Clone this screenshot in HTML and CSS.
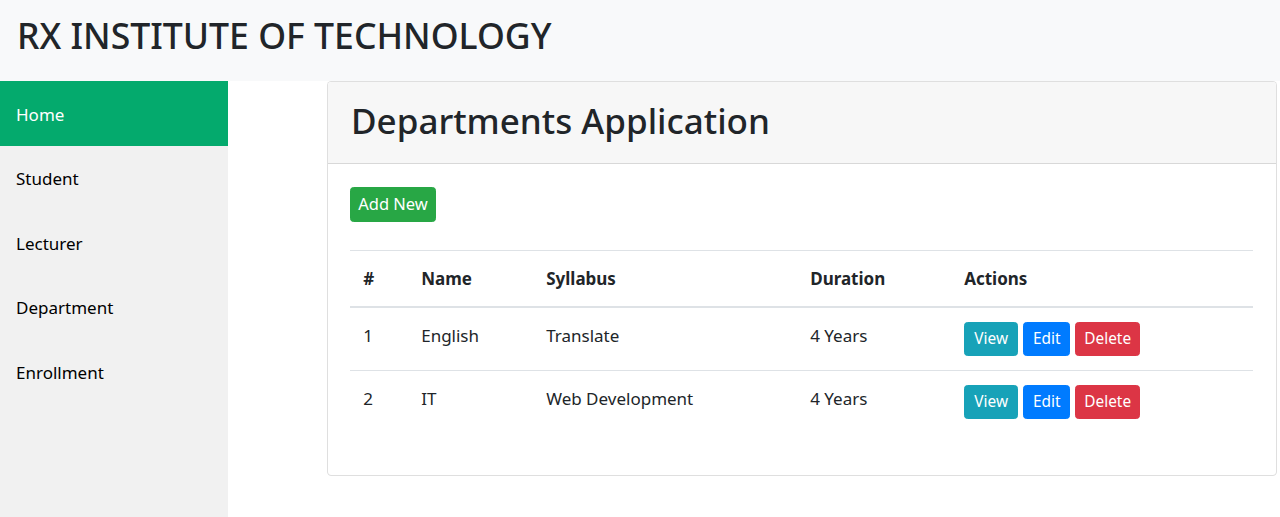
FILE: index.html
```html
<!DOCTYPE html>
<html lang="en">
<head>
<meta charset="utf-8">
<title>RX Institute of Technology</title>
<link rel="stylesheet" href="styles.css">
</head>
<body>
<header class="topbar">
  <h1 class="brand">RX INSTITUTE OF TECHNOLOGY</h1>
</header>
<div class="layout">
  <nav class="sidebar">
    <a class="nav-link active" href="#">Home</a>
    <a class="nav-link" href="#">Student</a>
    <a class="nav-link" href="#">Lecturer</a>
    <a class="nav-link" href="#">Department</a>
    <a class="nav-link" href="#">Enrollment</a>
  </nav>
  <main class="content">
    <section class="card">
      <div class="card-header">
        <h2 class="card-title">Departments Application</h2>
      </div>
      <div class="card-body">
        <button class="btn btn-success btn-add">Add New</button>
        <table class="table">
          <colgroup>
            <col class="c-num"><col class="c-name"><col class="c-syl"><col class="c-dur"><col>
          </colgroup>
          <thead>
            <tr><th>#</th><th>Name</th><th>Syllabus</th><th>Duration</th><th>Actions</th></tr>
          </thead>
          <tbody>
            <tr>
              <td>1</td><td>English</td><td>Translate</td><td>4 Years</td>
              <td><div class="actions"><button class="btn btn-sm btn-info">View</button><button class="btn btn-sm btn-primary">Edit</button><button class="btn btn-sm btn-danger">Delete</button></div></td>
            </tr>
            <tr>
              <td>2</td><td>IT</td><td>Web Development</td><td>4 Years</td>
              <td><div class="actions"><button class="btn btn-sm btn-info">View</button><button class="btn btn-sm btn-primary">Edit</button><button class="btn btn-sm btn-danger">Delete</button></div></td>
            </tr>
          </tbody>
        </table>
      </div>
    </section>
  </main>
</div>
</body>
</html>
```
FILE: styles.css
```css
* { box-sizing: border-box; }
html, body { margin: 0; padding: 0; }
body {
  font-family: "Noto Sans", "Open Sans", sans-serif;
  font-size: 17px;
  line-height: 1.5;
  color: #212529;
  background: #fff;
  height: 517px;
  overflow: hidden;
}
.topbar {
  background: #f8f9fa;
  height: 81px;
  display: flex;
  align-items: center;
  padding: 0 0 10px 17px;
}
.brand {
  margin: 0;
  font-size: 35.6px;
  font-weight: 500;
  line-height: 1.2;
  color: #212529;
}
.layout {
  display: flex;
  height: 436px;
}
.sidebar {
  width: 228px;
  flex: none;
  background: #f1f1f1;
  display: flex;
  flex-direction: column;
}
.nav-link {
  display: flex;
  align-items: center;
  height: 64.5px;
  padding: 2px 16px 0 16px;
  color: #000;
  text-decoration: none;
  font-size: 17px;
}
.nav-link.active {
  background: #04aa6d;
  color: #fff;
}
.content {
  flex: 1;
  padding: 0 3px 0 99px;
}
.card {
  height: 395px;
  border: 1px solid rgba(0,0,0,.125);
  border-radius: 4.4px;
  background: #fff;
  overflow: hidden;
}
.card-header {
  height: 82px;
  background: #f7f7f7;
  border-bottom: 1px solid rgba(0,0,0,.125);
  display: flex;
  align-items: center;
  padding: 0 0 4px 23px;
}
.card-title {
  margin: 0;
  font-size: 35px;
  font-weight: 500;
  line-height: 1.2;
}
.card-body {
  padding: 23px 23px 0 22px;
}
.btn {
  font-family: inherit;
  border: 1px solid transparent;
  border-radius: 3.5px;
  color: #fff;
  cursor: pointer;
  line-height: 1.5;
}
.btn-add {
  display: block;
  height: 35px;
  width: 86px;
  padding: 0;
  font-size: 16.5px;
}
.btn-sm {
  height: 34px;
  padding: 0 8px;
  font-size: 15.4px;
}
.btn-success { background: #28a745; border-color: #28a745; }
.btn-info { background: #17a2b8; border-color: #17a2b8; }
.btn-primary { background: #007bff; border-color: #007bff; }
.btn-danger { background: #dc3545; border-color: #dc3545; }
.table {
  width: 903px;
  margin-top: 28px;
  border-collapse: collapse;
  table-layout: fixed;
}
.c-num { width: 58px; }
.c-name { width: 125px; }
.c-syl { width: 264px; }
.c-dur { width: 154px; }
.table th, .table td {
  text-align: left;
  vertical-align: top;
  border-top: 1px solid #dee2e6;
  font-size: 17px;
}
.table th {
  font-weight: 700;
  padding: 15px 13.2px 14px;
  line-height: 26px;
  border-bottom: 2px solid #dee2e6;
}
.table td {
  padding: 14px 13.2px 14px;
  line-height: 28px;
}
.actions {
  display: flex;
  gap: 5px;
}
.actions .btn-info { width: 54px; }
.actions .btn-primary { width: 47px; }
.actions .btn-danger { width: 65px; }
```
